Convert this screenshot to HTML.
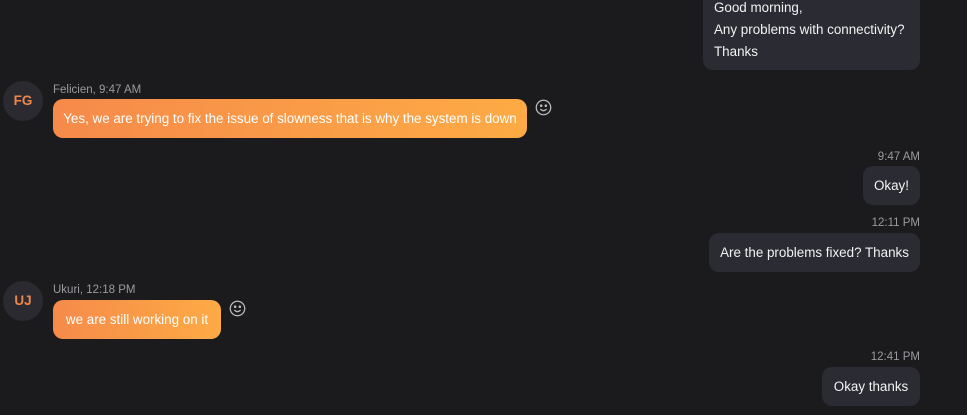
<!DOCTYPE html>
<html><head><style>
*{margin:0;padding:0;box-sizing:border-box}
body{width:967px;height:415px;background:#1b1b1d;font-family:"Liberation Sans",sans-serif;position:relative;overflow:hidden;color:#fff}
.b{position:absolute;border-radius:10px;font-size:13.4px;line-height:39px;padding:0 11px;white-space:nowrap}
.me{background:#2b2b33;color:#f2f2f2}
.them{background:linear-gradient(90deg,#f68a4a,#fdab45);text-align:center;padding:0}
.t{position:absolute;font-size:11.5px;color:#9a9a9f;white-space:nowrap}
.av{position:absolute;width:40px;height:40px;border-radius:50%;background:#2a2a30;color:#f0874a;font-weight:bold;font-size:13.5px;text-align:center;line-height:40px}
.em{position:absolute;width:17px;height:17px}
</style></head><body>
<div class="b me" style="left:703px;top:-12px;width:217px;height:82px;line-height:22px;padding-top:9px;border-radius:0 0 10px 10px">Good morning,<br>Any problems with connectivity?<br>Thanks</div>

<div class="av" style="left:3px;top:81px">FG</div>
<div class="t" style="left:53px;top:84px">Felicien, 9:47 AM</div>
<div class="b them" style="left:53px;top:99px;width:474px">Yes, we are trying to fix the issue of slowness that is why the system is down</div>
<svg class="em" style="left:535px;top:99px" viewBox="0 0 16 16" fill="none" stroke="#bbb" stroke-width="1.2"><circle cx="8" cy="8" r="6.8"/><circle cx="5.8" cy="6.3" r=".6" fill="#bbb"/><circle cx="10.2" cy="6.3" r=".6" fill="#bbb"/><path d="M5 9.5q3 3 6 0"/></svg>

<div class="t" style="right:47px;top:151px">9:47 AM</div>
<div class="b me" style="left:863px;top:166px;width:57px;text-align:center;padding:0">Okay!</div>

<div class="t" style="right:47px;top:217px">12:11 PM</div>
<div class="b me" style="left:709px;top:233px;width:211px;text-align:center;padding:0">Are the problems fixed? Thanks</div>

<div class="av" style="left:3px;top:281px">UJ</div>
<div class="t" style="left:53px;top:284px">Ukuri, 12:18 PM</div>
<div class="b them" style="left:53px;top:300px;width:168px">we are still working on it</div>
<svg class="em" style="left:229px;top:300px" viewBox="0 0 16 16" fill="none" stroke="#bbb" stroke-width="1.2"><circle cx="8" cy="8" r="6.8"/><circle cx="5.8" cy="6.3" r=".6" fill="#bbb"/><circle cx="10.2" cy="6.3" r=".6" fill="#bbb"/><path d="M5 9.5q3 3 6 0"/></svg>

<div class="t" style="right:47px;top:351px">12:41 PM</div>
<div class="b me" style="left:822px;top:367px;width:98px;text-align:center;padding:0">Okay thanks</div>
</body></html>
